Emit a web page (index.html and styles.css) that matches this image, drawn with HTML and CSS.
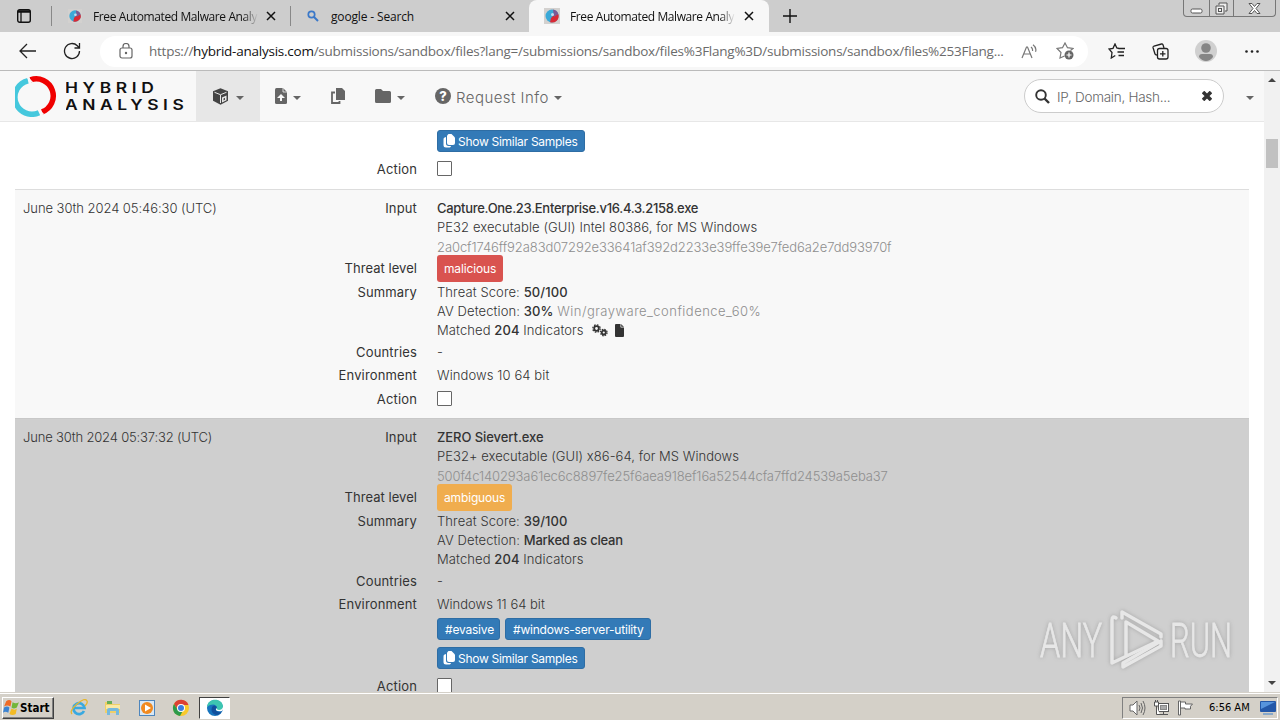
FILE: index.html
```html
<!DOCTYPE html>
<html lang="en">
<head>
    <meta charset="UTF-8">
    <title>Free Automated Malware Analysis Service</title>
    <link rel="stylesheet" href="styles.css">
</head>
<body>
    <!-- shared icons -->
    <svg class="defs" width="0" height="0">
        <symbol id="close" viewBox="0 0 10 10"><path d="M1 1l8 8M9 1l-8 8" stroke="#111" stroke-width="1.5"/></symbol>
        <symbol id="favicon" viewBox="0 0 16 16">
            <rect width="16" height="16" fill="#d3d1cf"/>
            <circle cx="8" cy="8" r="6.500" fill="#3aa9d8"/>
            <path d="M14.300 6a6.500 6.500 0 0 1-8.300 8.200L7 10l3-3z" fill="#d92a35"/>
            <path d="M9 1.600a6.500 6.500 0 0 1 5.300 4.400L10 9z" fill="#7c5a94"/>
            <circle cx="8.500" cy="6.500" r="1.500" fill="#c3dcf0"/>
        </symbol>
        <symbol id="copies" viewBox="0 0 12 14">
            <path d="M5.500 0h3L12 3.500V9a2 2 0 0 1-2 2H6a2 2 0 0 1-2-2V1.500z" fill="#fff"/>
            <path d="M3 3C.8 3.500.5 4 .5 6v5c0 1.700.8 2.500 2.500 2.500h3c1 0 1.700-.4 2-1.500H5.500C3.800 12 3 11 3 9.500z" fill="#fff"/>
        </symbol>
    </svg>

    <div class="tabs">
        <svg class="tab-menu" width="14" height="14" viewBox="0 0 14 14"><rect x=".7" y=".7" width="12.600" height="12.600" rx="2" fill="none" stroke="#111" stroke-width="1.400"/><path d="M1 2.500h12" stroke="#111" stroke-width="2.500"/><path d="M4 3v10" stroke="#111" stroke-width="1.300"/></svg>
        <div class="tab tab-first">
            <svg width="14" height="14"><use href="#favicon"/></svg>
            <span class="tab-title fade">Free Automated Malware Analy</span>
            <svg class="tab-close" width="10" height="10"><use href="#close"/></svg>
        </div>
        <div class="tab tab-second">
            <svg width="12" height="12" viewBox="0 0 12 12"><circle cx="4.500" cy="4.500" r="3.200" fill="none" stroke="#3a78c9" stroke-width="1.700"/><path d="M7 7l4 4" stroke="#3a78c9" stroke-width="2"/></svg>
            <span class="tab-title search-title">google - Search</span>
            <svg class="tab-close" width="10" height="10"><use href="#close"/></svg>
        </div>
        <div class="tab tab-active">
            <svg width="16" height="16"><use href="#favicon"/></svg>
            <span class="tab-title fade">Free Automated Malware Analy</span>
            <svg class="tab-close" width="10" height="10"><use href="#close"/></svg>
        </div>
        <svg class="new-tab" width="14" height="14" viewBox="0 0 14 14"><path d="M0 7h14M7 0v14" stroke="#111" stroke-width="1.400"/></svg>
        <div class="window-buttons">
            <span class="win-min"><svg width="13" height="6" viewBox="0 0 13 6"><rect x="1" y="1" width="11" height="4" rx="1.500" fill="#fff" stroke="#555"/></svg></span>
            <span class="win-max"><svg width="13" height="13" viewBox="0 0 13 13"><path d="M4 3V1h8v8h-2M1 4h8v8H1z" fill="#eee" stroke="#555"/><rect x="3.500" y="6.500" width="3" height="3" fill="none" stroke="#555"/></svg></span>
            <span class="win-close"><svg width="13" height="11" viewBox="0 0 13 11"><path d="M1 .5h3l2.500 3 2.500-3h3l-4 5 4 5H9l-2.500-3-2.500 3H1l4-5z" fill="#fff" stroke="#555"/></svg></span>
        </div>
    </div>

    <div class="toolbar">
        <svg class="back" width="18" height="16" viewBox="0 0 18 16" fill="none" stroke="#222" stroke-width="1.300"><path d="M8 1L1 8l7 7M1 8h16"/></svg>
        <svg class="reload" width="18" height="18" viewBox="0 0 18 18" fill="none" stroke="#222" stroke-width="1.300"><path d="M16.500 9A7.500 7.500 0 1 1 14.300 3.700L16.500 6M16.500 1v5h-5"/></svg>
        <div class="address">
            <svg class="lock" width="14" height="16" viewBox="0 0 14 16" fill="none" stroke="#666" stroke-width="1.200"><rect x="1" y="5" width="12" height="10" rx="2"/><path d="M4 5V3.500a3 3 0 0 1 6 0V5"/><circle cx="7" cy="10" r=".6" fill="#666"/></svg>
            <span class="url">https://<b>hybrid-analysis.com</b>/submissions/sandbox/files?lang=/submissions/sandbox/files%3Flang%3D/submissions/sandbox/files%253Flang...</span>
            <svg class="read" width="16" height="15" viewBox="0 0 16 15" fill="none" stroke="#777" stroke-width="1.200"><path d="M1 14L5.500 3h1L11 14M2.800 10h6.500M10 3q2 1.500 1.500 4M12 .8q4 3 2.500 7"/></svg>
            <svg class="fav" width="18" height="18" viewBox="0 0 18 18"><path d="M14.500 8.500L17 6.500 11.500 5.700 9 1 6.500 5.700 1 6.500l4 4-1 5.500 4.500-2" fill="none" stroke="#777" stroke-width="1.200"/><circle cx="13" cy="13" r="4.500" fill="#666"/><path d="M13 10.500v5M10.500 13h5" stroke="#fff" stroke-width="1.200"/></svg>
        </div>
        <svg class="favorites" width="17" height="16" viewBox="0 0 17 16" fill="none" stroke="#222" stroke-width="1.300"><path d="M11 5.500L8.800 5 7 1 5 5.300 1 6l3 3.500L3.300 15l4-2.500M10.500 5.500H17M9.500 9H16M10.500 12.500H16"/></svg>
        <svg class="collections" width="17" height="17" viewBox="0 0 17 17" fill="none" stroke="#222" stroke-width="1.300"><path d="M12 5L11 1.800Q10.500.8 9.500 1L2 3Q.8 3.500 1 4.500L3 11q.3 1 2 1"/><rect x="5.500" y="5.500" width="10.500" height="10.500" rx="2"/><path d="M10.800 8v5.500M8 10.800h5.500"/></svg>
        <svg class="profile" width="22" height="22" viewBox="0 0 22 22"><circle cx="11" cy="11" r="11" fill="#d0d0d0"/><circle cx="11" cy="8" r="4.800" fill="#858585"/><path d="M4 17q0-3 3-3h8q3 0 3 3-3 4-7 4t-7-4z" fill="#858585"/></svg>
        <svg class="more" width="14" height="3" viewBox="0 0 14 3" fill="#222"><circle cx="1.500" cy="1.500" r="1.300"/><circle cx="7" cy="1.500" r="1.300"/><circle cx="12.500" cy="1.500" r="1.300"/></svg>
    </div>

    <div class="viewport">
        <div class="page">
            <div class="navbar">
                <svg class="logo" width="42" height="42" viewBox="0 0 42 42" fill="none" stroke-width="5.500">
                    <path d="M13 5.700A17 17 0 1 0 24 37.700" stroke="#45c8dd"/>
                    <path d="M15.500 4.900A17 17 0 0 1 27 36.900" stroke="#f00000"/>
                    <path d="M11.500 1.500l8 8M21.500 32.500l7 7" stroke="#f8f8f8" stroke-width="1.500"/>
                </svg>
                <svg class="brand" width="130" height="36" viewBox="0 0 130 36">
                    <text transform="translate(-1 15) scale(1.2 1)" textLength="74">HYBRID</text>
                    <text transform="translate(-1 32) scale(1.2 1)" textLength="99">ANALYSIS</text>
                </svg>
                <div class="nav-item nav-selected">
                    <svg width="17" height="17" viewBox="0 0 17 17"><path d="M8.500.3l7.500 3v9.400l-7.500 4-7.500-4V3.300z" fill="#444"/><path d="M2.500 4.300l6 2.400 6-2.400M8.500 7v8" fill="none" stroke="#e7e7e7" stroke-width="1"/><path d="M10 9.500l4.500-2v4.800L10 14.500z" fill="#e7e7e7"/><path d="M11.500 10.500l1.500-.7v2l-1.500.7z" fill="#444"/></svg>
                    <i class="caret"></i>
                </div>
                <div class="nav-item nav-upload">
                    <svg width="12" height="16" viewBox="0 0 12 16"><path d="M1.500 0H8l4 4v10.500q0 1.500-1.500 1.500h-9Q0 16 0 14.500v-13Q0 0 1.500 0z" fill="#666"/><path d="M8 0v4h4" fill="none" stroke="#f8f8f8" stroke-width=".8"/><path d="M6 6l4 4H7v3H5v-3H2z" fill="#f8f8f8"/></svg>
                    <i class="caret"></i>
                </div>
                <div class="nav-item nav-copy">
                    <svg width="14" height="16" viewBox="0 0 14 16"><path d="M5 0h6l3 3v9H5z" fill="#666"/><path d="M4 4.500H1V15h7.500v-2" fill="none" stroke="#666" stroke-width="1.800"/></svg>
                </div>
                <div class="nav-item nav-folder">
                    <svg width="16" height="14" viewBox="0 0 16 14"><path d="M1.500 0H6l2 2h6.500Q16 2 16 3.500v9q0 1.500-1.500 1.500h-13Q0 14 0 12.500v-11Q0 0 1.500 0z" fill="#666"/></svg>
                    <i class="caret"></i>
                </div>
                <div class="nav-item nav-request">
                    <span class="question">?</span>
                    <span class="nav-text">Request Info</span>
                    <i class="caret"></i>
                </div>
                <div class="search">
                    <svg width="15" height="15" viewBox="0 0 15 15" fill="none" stroke="#333"><circle cx="6" cy="6" r="4.800" stroke-width="1.900"/><path d="M9.500 9.500l4.500 4.500" stroke-width="2.400"/></svg>
                    <span class="search-text">IP, Domain, Hash...</span>
                    <svg class="clear" width="10" height="10" viewBox="0 0 10 10"><path d="M1 1l8 8M9 1l-8 8" stroke="#333" stroke-width="3.600"/></svg>
                </div>
                <i class="caret last-caret"></i>
            </div>

            <div class="results">
                <div class="result result-top">
                    <div class="date"></div>
                    <div class="details">
                        <div class="field buttons"><span class="label"></span><div class="value"><span class="tag similar"><svg width="12" height="14"><use href="#copies"/></svg><span>Show Similar Samples</span></span></div></div>
                        <div class="field action"><span class="label">Action</span><div class="value"><span class="checkbox"></span></div></div>
                    </div>
                </div>

                <div class="result result-light">
                    <div class="date">June 30th 2024 05:46:30 (UTC)</div>
                    <div class="details">
                        <div class="field input"><span class="label">Input</span><div class="value">
                            <p class="name name-capture">Capture.One.23.Enterprise.v16.4.3.2158.exe</p>
                            <p class="type-first">PE32 executable (GUI) Intel 80386, for MS Windows</p>
                            <p class="hash">2a0cf1746ff92a83d07292e33641af392d2233e39ffe39e7fed6a2e7dd93970f</p>
                        </div></div>
                        <div class="field threat"><span class="label">Threat level</span><div class="value"><span class="badge malicious">malicious</span></div></div>
                        <div class="field summary"><span class="label">Summary</span><div class="value">
                            <p>Threat Score: <b>50/100</b></p>
                            <p>AV Detection: <b>30%</b> <span class="muted">Win/grayware_confidence_60%</span></p>
                            <p>Matched <b>204</b> Indicators<svg class="gears" width="16" height="13" viewBox="0 0 16 13" fill="none" stroke="#333"><circle cx="4.500" cy="4.500" r="2.300" stroke-width="1.800"/><circle cx="4.500" cy="4.500" r="3.700" stroke-width="1.300" stroke-dasharray="1.600 1.300"/><circle cx="11.800" cy="8.500" r="2" stroke-width="1.800"/><circle cx="11.800" cy="8.500" r="3.300" stroke-width="1.200" stroke-dasharray="1.500 1.100"/></svg><svg class="file" width="9" height="13" viewBox="0 0 9 13"><path d="M1 0h5l3 3v9q0 1-1 1H1q-1 0-1-1V1q0-1 1-1z" fill="#333"/><path d="M5.800 0v3.200H9" fill="none" stroke="#f8f8f8" stroke-width=".7"/></svg></p>
                        </div></div>
                        <div class="field countries"><span class="label">Countries</span><div class="value">-</div></div>
                        <div class="field environment"><span class="label">Environment</span><div class="value">Windows 10 64 bit</div></div>
                        <div class="field action"><span class="label">Action</span><div class="value"><span class="checkbox"></span></div></div>
                    </div>
                </div>

                <div class="result result-dark">
                    <div class="date date-second">June 30th 2024 05:37:32 (UTC)</div>
                    <div class="details">
                        <div class="field input"><span class="label">Input</span><div class="value">
                            <p class="name">ZERO Sievert.exe</p>
                            <p class="type-second">PE32+ executable (GUI) x86-64, for MS Windows</p>
                            <p class="hash">500f4c140293a61ec6c8897fe25f6aea918ef16a52544cfa7ffd24539a5eba37</p>
                        </div></div>
                        <div class="field threat"><span class="label">Threat level</span><div class="value"><span class="badge ambiguous">ambiguous</span></div></div>
                        <div class="field summary"><span class="label">Summary</span><div class="value">
                            <p>Threat Score: <b>39/100</b></p>
                            <p>AV Detection: <b class="clean">Marked as clean</b></p>
                            <p>Matched <b>204</b> Indicators</p>
                        </div></div>
                        <div class="field countries"><span class="label">Countries</span><div class="value">-</div></div>
                        <div class="field environment"><span class="label">Environment</span><div class="value env-second">Windows 11 64 bit</div></div>
                        <div class="field buttons"><span class="label"></span><div class="value tag-list"><span class="tag evasive">#evasive</span><span class="tag utility">#windows-server-utility</span></div></div>
                        <div class="field buttons"><span class="label"></span><div class="value"><span class="tag similar"><svg width="12" height="14"><use href="#copies"/></svg><span>Show Similar Samples</span></span></div></div>
                        <div class="field action"><span class="label">Action</span><div class="value"><span class="checkbox"></span></div></div>
                    </div>
                </div>
            </div>
        </div>
        <div class="scrollbar">
            <i class="arrow-up"></i>
            <span class="thumb"></span>
            <i class="arrow-down"></i>
        </div>
    </div>

    <svg class="watermark" width="200" height="68" viewBox="0 0 200 68">
        <g fill="#ededed" stroke="#ededed" stroke-width=".8" font-family="Roboto" font-size="48">
            <text x="4" y="51" textLength="62" lengthAdjust="spacingAndGlyphs">ANY</text>
            <text x="134" y="51" textLength="62" lengthAdjust="spacingAndGlyphs">RUN</text>
        </g>
        <g fill="none" stroke="#ededed" stroke-width="3.500" stroke-linejoin="round" stroke-linecap="round">
            <path d="M80 12q-4-3-4 2v43l46-22-32-19v33"/>
            <path d="M86 12V6l39 22v3M125 35L87 57v4l38-21v-5"/>
        </g>
    </svg>

    <div class="taskbar">
        <div class="start">
            <svg width="17" height="17" viewBox="0 0 16 16"><path d="M3 2q3-2 5 0L7 7Q4 5 1 7z" fill="#ef6b26"/><path d="M9 3q3 2 6 0l-2 5q-3 2-5 0z" fill="#73b63a"/><path d="M1 8q3-2 5 0l-1 5q-3-2-5 0z" fill="#3b83d2"/><path d="M8 9q3 2 5 0l-1 5q-3 2-6 0z" fill="#f3bb25"/></svg>
            <span>Start</span>
        </div>
        <div class="quick">
            <svg width="18" height="18" viewBox="0 0 18 18" fill="none"><path d="M14 12a5.500 5.500 0 1 1 .5-3H4" stroke="#39a9e0" stroke-width="2.700"/><path d="M2 15Q-1 12 7 5t10-3q1 2-2 5" stroke="#e5b62e" stroke-width="1.300"/></svg>
            <svg width="18" height="18" viewBox="0 0 18 18"><path d="M1 3h6l2 2h7v9H1z" fill="#efcf68"/><path d="M3 2h5v3H3z" fill="#67ae55"/><path d="M2 6h14v4H2z" fill="#f9e9a5"/><path d="M3 16v-5q0-2 2-2h8q2 0 2 2v5h-3v-4H6v4z" fill="#75b9de"/></svg>
            <svg width="18" height="18" viewBox="0 0 18 18"><rect x="1.500" y="1.500" width="15" height="15" fill="#d9e8f5" stroke="#4e86bd"/><circle cx="9" cy="9" r="6" fill="#f18a20"/><path d="M7 5.500L13 9l-6 3.500z" fill="#fff"/></svg>
            <svg width="18" height="18" viewBox="0 0 18 18"><circle cx="9" cy="9" r="8" fill="#f8c92c"/><path d="M2 5a8 8 0 0 1 14.500 1H9l-3 5z" fill="#dc4034"/><path d="M2 5l4.500 7 4 .5L8 17A8 8 0 0 1 2 5z" fill="#2c9a4b"/><circle cx="9" cy="9" r="4" fill="#fff"/><circle cx="9" cy="9" r="3" fill="#3b7de0"/></svg>
        </div>
        <div class="edge-button">
            <svg width="18" height="18" viewBox="0 0 18 18"><circle cx="9" cy="9" r="8" fill="#1774bd"/><path d="M1 8C2-2 17-1 17 8q0 4-5 4-3 0-1-3Q10 4 4 6q-2 1-3 2z" fill="#3dc6b1"/><path d="M11 8q-3 3 1 5 2 1 4-1-2 4-6 4Q4 14 6 8q2-3 5 0z" fill="#114f9c"/><path d="M10 9q-1 4 6 3 2-2 1-4-1 3-4 3-2 0-3-2z" fill="#fff"/></svg>
        </div>
        <div class="tray">
            <svg width="17" height="16" viewBox="0 0 17 16" fill="none" stroke="#666"><path d="M1 5h3l4-4v14l-4-4H1z" fill="#fff"/><path d="M10 5q2 3 0 6M12 3q3 5 0 10M14 1q4 7 0 14"/></svg>
            <svg width="17" height="16" viewBox="0 0 17 16" fill="none" stroke="#555"><rect x="5.500" y="3.500" width="10" height="8" fill="#fff"/><rect x="7.500" y="5.500" width="6" height="4" fill="#aaa" stroke="#888"/><path d="M7 14.500h8M10.500 12v2"/><path d="M1.500 2v4h4V2zM2.500 0v2M4.500 0v2M3.500 6v8.500H7" fill="#fff"/></svg>
            <svg width="17" height="16" viewBox="0 0 17 16" fill="#fff" stroke="#666"><path d="M1.500 15V1h2v14zM3.500 2h5v2h7q-3 2-2 5H8V8H3.500z"/></svg>
            <span class="clock">6:56 AM</span>
            <svg width="16" height="14" viewBox="0 0 16 14"><rect width="16" height="11" rx="1" fill="#2458a8"/><path d="M1 1h14L1 8z" fill="#5794dc"/><path d="M3 12h10v2H3z" fill="#87a8ca"/></svg>
        </div>
    </div>
</body>
</html>
```
FILE: styles.css
```css
* {
    box-sizing: border-box;
}

body {
    margin: 0;
    width: 1280px;
    height: 720px;
    overflow: hidden;
    display: flex;
    flex-direction: column;
    position: relative;
    background: #fff;
    color: #333;
    font-family: Inter, sans-serif;
    font-size: 13px;
    font-weight: 300;
}

svg {
    flex-shrink: 0;
}

.defs {
    position: absolute;
}

/* browser tabs */
.tabs {
    height: 32px;
    flex-shrink: 0;
    display: flex;
    align-items: center;
    background: #cdcdcd;
    font: 12px "Open Sans", sans-serif;
    color: #111;
}

.tab-menu {
    margin: 0 20px 0 17px;
}

.tab {
    display: flex;
    align-items: center;
    height: 20px;
    border-left: 1px solid #888;
}

.tab-title {
    white-space: nowrap;
    margin-left: 11px;
    letter-spacing: -.15px;
}

.tab-close {
    margin-left: auto;
}

.fade {
    width: 165px;
    letter-spacing: -.4px;
    -webkit-mask-image: linear-gradient(90deg, #000 91%, transparent);
    mask-image: linear-gradient(90deg, #000 91%, transparent);
}

.tab-first {
    width: 239px;
    padding: 0 14px 0 16px;
}

.tab-second {
    width: 239px;
    padding: 0 14px 0 16px;
}

.search-title {
    margin-left: 12px;
}

.tab-active {
    width: 240px;
    height: 32px;
    padding: 0 15px;
    border: 0;
    border-radius: 8px 8px 0 0;
    background: #f7f7f7;
}

.tab-active .tab-title {
    margin-left: 10px;
}

.new-tab {
    margin-left: 14px;
}

.window-buttons {
    margin-left: auto;
    margin-right: 4px;
    align-self: flex-start;
    display: flex;
    height: 17px;
    border: 1px solid #777;
    border-top: 0;
    border-radius: 0 0 4px 4px;
}

.window-buttons span {
    display: flex;
    align-items: center;
    justify-content: center;
}

.win-min {
    width: 25px;
    padding-top: 5px;
}

.win-max {
    width: 25px;
    border: solid #777;
    border-width: 0 1px;
}

.win-close {
    width: 41px;
}

/* browser toolbar */
.toolbar {
    height: 39px;
    flex-shrink: 0;
    display: flex;
    align-items: center;
    background: #f7f7f7;
    border-bottom: 1px solid #bbb;
}

.back {
    margin-left: 19px;
}

.reload {
    margin-left: 26px;
}

.address {
    width: 988px;
    height: 31px;
    margin-left: 19px;
    padding: 0 14px 0 19px;
    border-radius: 16px;
    display: flex;
    align-items: center;
    background: #fff;
}

.url {
    font: 13.500px "Open Sans", sans-serif;
    letter-spacing: -.245px;
    color: #6b6b6b;
    margin-left: 16px;
    white-space: nowrap;
    width: 858px;
}

.url b {
    font-weight: 400;
    color: #111;
}

.read {
    margin-left: 14px;
}

.fav {
    margin-left: auto;
}

.favorites {
    margin-left: 20px;
}

.collections {
    margin-left: 27px;
}

.profile {
    margin-left: 26px;
}

.more {
    margin-left: 28px;
}

/* page area with its scrollbar */
.viewport {
    height: 621px;
    flex-shrink: 0;
    display: flex;
    overflow: hidden;
}

.page {
    width: 1264px;
}

.navbar {
    height: 51px;
    display: flex;
    align-items: center;
    background: #f8f8f8;
    border-bottom: 1px solid #e7e7e7;
    color: #666;
}

.logo {
    margin-left: 15px;
    margin-top: -1px;
}

.brand {
    margin-left: 9px;
    font-size: 14.500px;
    font-weight: 600;
    fill: #111;
}

.nav-item {
    display: flex;
    align-items: center;
    height: 50px;
}

.caret {
    border: 4px solid transparent;
    border-top-color: #666;
    border-bottom: 0;
    margin: 3px 0 0 7px;
}

.nav-selected {
    width: 64px;
    padding-left: 16px;
    background: #e7e7e7;
}

.nav-upload {
    margin-left: 15px;
}

.nav-upload .caret {
    margin-left: 6px;
}

.nav-copy {
    margin-left: 30px;
}

.nav-folder {
    margin-left: 30px;
}

.nav-folder .caret {
    margin-left: 6px;
}

.nav-request {
    margin-left: 30px;
}

.question {
    width: 16px;
    height: 16px;
    border-radius: 50%;
    background: #666;
    color: #fff;
    font-size: 13px;
    font-weight: 800;
    line-height: 16px;
    text-align: center;
}

.nav-text {
    margin: 3px 0 0 5px;
    width: 93px;
    font-size: 15px;
    letter-spacing: .45px;
    white-space: nowrap;
}

.nav-request .caret {
    margin-left: 5px;
}

.search {
    width: 200px;
    height: 34px;
    margin-left: auto;
    padding: 0 11px 0 10px;
    border: 1px solid #ccc;
    border-radius: 17px;
    display: flex;
    align-items: center;
    background: #fff;
}

.search-text {
    margin: 2px 0 0 7px;
    font-size: 13.500px;
    letter-spacing: -.27px;
    white-space: nowrap;
}

.clear {
    margin-left: auto;
}

.last-caret {
    margin: 3px 10px 0 22px;
}

/* result list */
.results {
    margin: 0 15px;
    line-height: 19px;
}

.result {
    display: flex;
    border-top: 1px solid #ddd;
    padding: 9px 0 0 8px;
}

.result-top {
    height: 67px;
    border-top: 0;
    padding-top: 8px;
}

.result-light {
    height: 229px;
    background: #f8f8f8;
}

.result-dark {
    height: 290px;
    background: #cfcfcf;
    border-color: #c8c8c8;
}

.date {
    width: 300px;
    letter-spacing: -.06px;
    white-space: nowrap;
}

.date-second {
    letter-spacing: -.17px;
}

.field {
    display: flex;
    gap: 20px;
}

.label {
    width: 94px;
    text-align: right;
    font-weight: 400;
    letter-spacing: .15px;
    white-space: nowrap;
}

.value {
    white-space: nowrap;
    letter-spacing: .1px;
}

p {
    margin: 0;
    height: 19px;
}

b {
    font-weight: 500;
}

.clean {
    letter-spacing: -.2px;
}

.input {
    height: 56px;
}

.hash {
    color: #8e8e8e;
    line-height: 21px;
    letter-spacing: -.09px;
}

.threat {
    height: 28px;
    line-height: 27px;
}

.threat .label {
    letter-spacing: .05px;
}

.summary {
    height: 59px;
}

.countries {
    height: 23px;
    line-height: 20px;
}

.environment {
    height: 24px;
    line-height: 20px;
}

.env-second {
    letter-spacing: 0;
}

.action {
    height: 30px;
    line-height: 20px;
}

.buttons {
    height: 29px;
}

.name {
    font-weight: 500;
    letter-spacing: -.06px;
}

.name-capture {
    letter-spacing: -.29px;
}

.type-second {
    letter-spacing: .05px;
}

.muted {
    color: #8e8e8e;
    letter-spacing: .47px;
}

.badge {
    display: block;
    height: 27px;
    padding: 0 7px;
    border-radius: 3px;
    font-size: 12px;
    font-weight: 400;
    letter-spacing: -.15px;
    color: #fff;
}

.ambiguous {
    width: 75px;
    background: #f0ad4e;
}

.malicious {
    width: 66px;
    background: #d9534f;
}

.gears {
    margin-left: 8px;
    vertical-align: -2px;
}

.file {
    margin-left: 7px;
    vertical-align: -2px;
}

.tag-list {
    display: flex;
    gap: 5px;
}

.tag {
    height: 22px;
    padding: 0 7px;
    border-radius: 3px;
    display: flex;
    align-items: center;
    background: #337ab7;
    border: 1px solid #2e6da4;
    font-size: 12px;
    font-weight: 400;
    letter-spacing: -.2px;
    color: #fff;
}

.similar {
    width: 148px;
    padding: 0 5px;
    gap: 3px;
    letter-spacing: -.28px;
}

.evasive {
    width: 63px;
}

.utility {
    width: 146px;
}

.checkbox {
    display: block;
    width: 15px;
    height: 15px;
    margin-top: 2px;
    border: 1px solid #666;
    border-radius: 1px;
    background: #fff;
}

.scrollbar {
    width: 16px;
    display: flex;
    flex-direction: column;
    align-items: center;
    background: #f1f1f1;
}

.arrow-up {
    margin-top: 7px;
    border: 4px solid transparent;
    border-bottom-color: #444;
    border-top: 0;
}

.thumb {
    width: 12px;
    height: 29px;
    margin-top: 57px;
    background: #c1c1c1;
}

.arrow-down {
    margin: auto 0 7px;
    border: 4px solid transparent;
    border-top-color: #444;
    border-bottom: 0;
}

/* logo laid over the lower right of the screen */
.watermark {
    position: absolute;
    left: 1036px;
    top: 606px;
    opacity: .8;
    filter: drop-shadow(0 0 2px #999);
}

/* taskbar */
.taskbar {
    height: 28px;
    flex-shrink: 0;
    display: flex;
    align-items: center;
    padding: 2px 2px 0;
    background: #d4d0c8;
    border-top: 1px solid #d4d0c8;
    box-shadow: inset 0 1px #fff;
    font-family: "DejaVu Sans Condensed", "DejaVu Sans", sans-serif;
    font-size: 11px;
    font-weight: 400;
    color: #000;
}

.start {
    width: 52px;
    height: 22px;
    display: flex;
    align-items: center;
    border: 1px solid;
    border-color: #fff #404040 #404040 #fff;
    box-shadow: inset -1px -1px #808080;
    font-size: 11.500px;
    font-weight: 700;
}

.quick {
    display: flex;
    gap: 16px;
    margin-left: 16px;
}

.edge-button {
    width: 31px;
    height: 22px;
    margin-left: 9px;
    display: flex;
    align-items: center;
    justify-content: center;
    background: #fff;
    border: 1px solid;
    border-color: #404040 #fff #fff #404040;
}

.tray {
    width: 156px;
    height: 22px;
    margin-left: auto;
    padding: 0 1px 0 6px;
    display: flex;
    align-items: center;
    gap: 7px;
    border: 1px solid;
    border-color: #808080 #fff #fff #808080;
}

.clock {
    width: 44px;
    margin-left: 8px;
    white-space: nowrap;
}
```
